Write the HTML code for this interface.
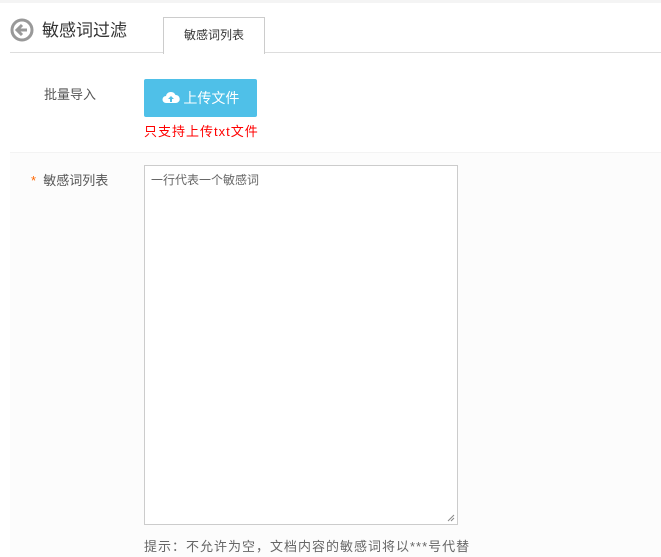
<!DOCTYPE html>
<html><head><meta charset="utf-8"><style>
body{margin:0;width:661px;height:556px;background:#fff;font-family:"Liberation Sans","Noto Sans CJK SC",sans-serif;position:relative;overflow:hidden}
.a{position:absolute}
</style></head><body>
<div class="a" style="left:0;top:0;width:661px;height:3px;background:#f4f4f4"></div>
<svg class="a" style="left:10px;top:18px" width="24" height="24" viewBox="0 0 24 24"><circle cx="12" cy="12" r="10" fill="none" stroke="#999" stroke-width="3"/><path d="M12 7 L7 12 L12 17 M7 12 H17" fill="none" stroke="#999" stroke-width="3"/></svg>
<div class="a" style="left:42px;top:18px;font-size:17px;color:#333;line-height:26px">敏感词过滤</div>
<div class="a" style="left:10px;top:52px;width:651px;height:1px;background:#ddd"></div>
<div class="a" style="left:163px;top:17px;width:100px;height:36px;border:1px solid #ccc;border-bottom:none;background:#fff;font-size:12px;color:#333;text-align:center;line-height:34px">敏感词列表</div>
<div class="a" style="left:44px;top:84px;font-size:13px;color:#555">批量导入</div>
<div class="a" style="left:144px;top:79px;width:113px;height:38px;background:#4fc0e8;border-radius:2px;color:#fff;font-size:14px;line-height:38px;text-align:center"><svg width="18" height="13" viewBox="0 0 18 13" style="vertical-align:-1px"><path d="M4 12 A3.5 3.5 0 0 1 4 5 A5 5 0 0 1 13.5 4 A4 4 0 0 1 14 12 Z" fill="#fff"/><path d="M9 5 L6 8 H8 V11 H10 V8 H12 Z" fill="#4fc0e8"/></svg> 上传文件</div>
<div class="a" style="left:144px;top:121px;font-size:13px;color:#f00;letter-spacing:1px">只支持上传txt文件</div>
<div class="a" style="left:10px;top:152px;width:651px;height:404px;background:#fcfcfc;border-top:1px solid #f3f3f3"></div>
<div class="a" style="left:31px;top:170px;font-size:13px;color:#555"><span style="color:#f60">*</span>&nbsp;&nbsp;敏感词列表</div>
<div class="a" style="left:144px;top:165px;width:312px;height:358px;border:1px solid #ccc;background:#fff"></div>
<div class="a" style="left:151px;top:171px;font-size:12px;color:#666">一行代表一个敏感词</div>
<svg class="a" style="left:447px;top:514px" width="8" height="8"><path d="M1 7 L7 1 M4 7 L7 4" stroke="#888"/></svg>
<div class="a" style="left:144px;top:536px;font-size:13px;color:#666;letter-spacing:1px">提示：不允许为空，文档内容的敏感词将以***号代替</div>
</body></html>
